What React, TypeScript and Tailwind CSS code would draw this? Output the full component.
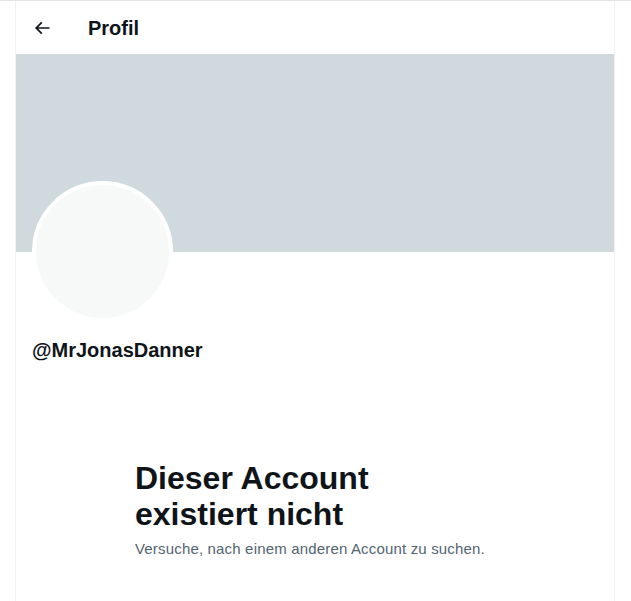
import { ReactNode } from 'react';

function BackArrow() {
  return (
    <svg viewBox="0 0 24 24" className="w-5 h-5 fill-[#0f1419]" aria-hidden="true">
      <path d="M7.414 13l5.043 5.04-1.414 1.42L3.586 12l7.457-7.46 1.414 1.42L7.414 11H21v2H7.414z" />
    </svg>
  );
}

function Header({ children }: { children: ReactNode }) {
  return (
    <div className="h-[53px] flex items-center pl-2 bg-white">
      <button className="w-9 h-9 rounded-full flex items-center justify-center hover:bg-[#0f1419]/10">
        <BackArrow />
      </button>
      <h2 className="ml-7 text-[20px] leading-6 font-bold text-[#0f1419]">{children}</h2>
    </div>
  );
}

export default function App() {
  return (
    <div
      className="min-h-screen bg-white border-t border-[#e1e4e6] flex"
      style={{ fontFamily: '"Liberation Sans", Arial, sans-serif' }}
    >
      <main className="ml-[15px] w-[600px] min-h-[600px] border-x border-[#eff3f4] flex flex-col">
        <Header>Profil</Header>

        {/* Banner */}
        <div className="h-[198px] bg-[#cfd9de]" />

        {/* Avatar + handle */}
        <div className="px-4">
          <div className="-mt-[71px] w-[141px] h-[141px] rounded-full border-4 border-white bg-[#f7f9f9]" />
          <div className="mt-4 text-[20px] leading-6 font-bold text-[#0f1419]">@MrJonasDanner</div>
        </div>

        {/* Empty state */}
        <div className="flex justify-center mt-[98px]">
          <div className="w-[400px] px-5">
            <h3 className="text-[32px] leading-9 font-bold text-[#0f1419]">
              Dieser Account
              <br />
              existiert nicht
            </h3>
            <p className="mt-[7px] text-[15px] leading-5 tracking-[0.17px] text-[#536471]">
              Versuche, nach einem anderen Account zu suchen.
            </p>
          </div>
        </div>
      </main>
    </div>
  );
}
